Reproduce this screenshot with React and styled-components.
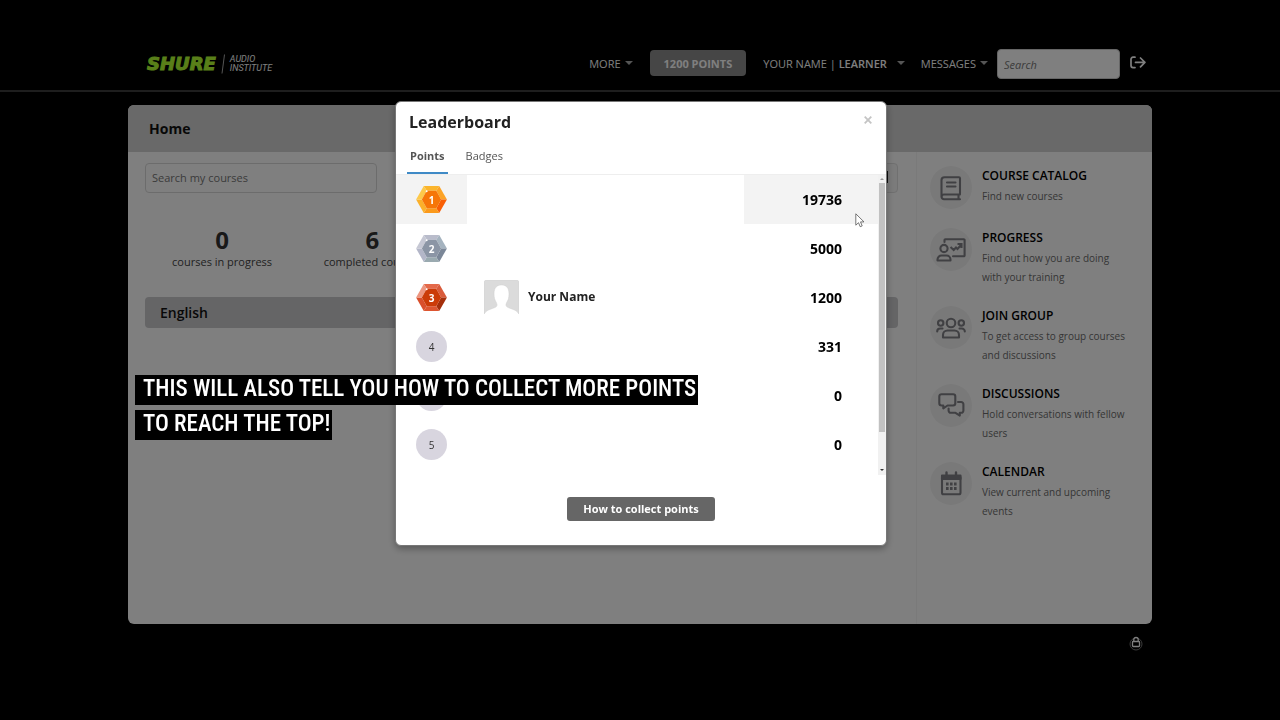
import React from "react";
import styled, { createGlobalStyle } from "styled-components";

const courseLinks = [
  { icon: "book", title: "COURSE CATALOG", text: "Find new courses" },
  { icon: "progress", title: "PROGRESS", text: "Find out how you are doing with your training" },
  { icon: "group", title: "JOIN GROUP", text: "To get access to group courses and discussions" },
  { icon: "chat", title: "DISCUSSIONS", text: "Hold conversations with fellow users" },
  { icon: "calendar", title: "CALENDAR", text: "View current and upcoming events" },
];

const leaders = [
  { rank: "1", points: "19736", gem: "gold", active: true },
  { rank: "2", points: "5000", gem: "silver" },
  { rank: "3", points: "1200", gem: "bronze", name: "Your Name" },
  { rank: "4", points: "331" },
  { rank: "", points: "0" },
  { rank: "5", points: "0" },
];

// top, upper right, lower right, bottom, lower left, upper left, center
const gems = {
  gold: ["#fbb52c", "#fca326", "#f95f05", "#fb9a1c", "#fbb02b", "#fdc94a", "#f67608"],
  silver: ["#b9bccb", "#a5b3bf", "#7b8798", "#9aaab0", "#b3b6c8", "#c6c8d4", "#8b95a5"],
  bronze: ["#e4694a", "#d95b3b", "#a52f0b", "#dd5530", "#d94f2c", "#ec9680", "#cb3b08"],
};

function Gem({ kind }) {
  const c = gems[kind];
  return (
    <svg width="31" height="27" viewBox="0 0 32 28" aria-hidden="true">
      <polygon points="8,0 24,0 21,5 11,5" fill={c[0]} />
      <polygon points="24,0 32,14 26,14 21,5" fill={c[1]} />
      <polygon points="32,14 24,28 21,23 26,14" fill={c[2]} />
      <polygon points="24,28 8,28 11,23 21,23" fill={c[3]} />
      <polygon points="8,28 0,14 6,14 11,23" fill={c[4]} />
      <polygon points="0,14 8,0 11,5 6,14" fill={c[5]} />
      <polygon points="11,5 21,5 26,14 21,23 11,23 6,14" fill={c[6]} />
      <circle cx="11" cy="5.500" r="1" fill="#fff" />
    </svg>
  );
}

function LinkIcon({ name }) {
  return (
    <svg width="30" height="30" viewBox="0 0 30 30" fill="none" stroke="currentColor" strokeWidth="2.1" strokeLinejoin="round" strokeLinecap="round" aria-hidden="true">
      {name === "book" && (
        <>
          <path d="M24 21.5H8a2.4 2.4 0 0 0 0 4.800h16M5.500 24V7.200A3 3 0 0 1 8.500 4.200H23a1 1 0 0 1 1 1V20.500a1 1 0 0 1-1 1M22.500 21.500v4.800" />
          <path d="M11 9.500h8.500M11 13.500h8.500" />
        </>
      )}
      {name === "progress" && (
        <>
          <circle cx="8" cy="13.500" r="3.600" />
          <path d="M1.500 25.500v-1a4 4 0 0 1 4-4h5a4 4 0 0 1 4 4v1zM8.500 7V5a.8.8 0 0 1 .8-.8h18.500a.8.8 0 0 1 .8.8v15.500a.8.8 0 0 1-.8.8H17" />
          <path d="M14.500 12l3.200 3 2.300-2.500 1.500 1.500 3.500-4M21.500 9h4v4" strokeLinecap="butt" strokeLinejoin="miter" />
        </>
      )}
      {name === "group" && (
        <>
          <circle cx="15" cy="10" r="4.300" />
          <circle cx="4.700" cy="10" r="2.700" />
          <circle cx="25.300" cy="10" r="2.700" />
          <path d="M7 24.500v-2.500a4.500 4.500 0 0 1 4.500-4.500h7a4.500 4.500 0 0 1 4.500 4.500v2.500zM1.200 18.500a3 3 0 0 1 3-3h2.300M28.800 18.500a3 3 0 0 0-3-3h-2.300" />
        </>
      )}
      {name === "chat" && (
        <>
          <path d="M5.500 3.200h11.600a2.200 2.200 0 0 1 2.200 2.200v6.900a2.200 2.200 0 0 1-2.200 2.200h-5.600l-4.200 3v-3H5.500a2.200 2.200 0 0 1-2.200-2.200V5.400a2.200 2.200 0 0 1 2.200-2.200z" />
          <path d="M22 11h3.200a2.200 2.200 0 0 1 2.200 2.200v6.400a2.200 2.200 0 0 1-2.200 2.200h-1.400v2.800l-4.300-2.800h-4.700a2.200 2.200 0 0 1-2.200-2.200v-2" />
        </>
      )}
      {name === "calendar" && (
        <>
          <rect x="6" y="7.200" width="18.500" height="18" rx="1.500" />
          <path d="M6 6.500h18.500v3.500H6z" fill="currentColor" />
          <path d="M10.500 3.500v4M20 3.500v4" strokeWidth="2.400" />
          <path d="M10 15h2.600M14 15h2.600M18 15h2.600M10 19.500h2.600M14 19.500h2.600M18 19.500h2.600" strokeWidth="2.800" strokeLinecap="butt" />
        </>
      )}
    </svg>
  );
}

function App() {
  return (
    <Page>
      <GlobalStyle />
      <Header>
        <HeaderInner>
          <Logo href="#home">
            <Brand>SHURE</Brand>
            <svg width="4" height="20" viewBox="0 0 4 20" aria-hidden="true">
              <path d="M3.500 0.500L1 19.500" stroke="#aaa" />
            </svg>
            <Institute>
              AUDIO
              <br />
              INSTITUTE
            </Institute>
          </Logo>
          <Nav>
            <NavLink href="#more">
              MORE <Caret />
            </NavLink>
            <PointsButton type="button">1200 POINTS</PointsButton>
            <NavLink href="#profile" $wide>
              <span>
                YOUR NAME | <b>LEARNER</b>
              </span>
              <Caret />
            </NavLink>
            <NavLink href="#messages">
              MESSAGES <Caret />
            </NavLink>
            <NavSearch type="search" placeholder="Search" aria-label="Search" />
            <LogoutLink href="#logout" aria-label="Log out">
              <svg width="16" height="13" viewBox="0 0 16 13" fill="none" stroke="currentColor" strokeWidth="1.700" strokeLinecap="round" strokeLinejoin="round">
                <path d="M5 1.200H3a2 2 0 0 0-2 2v6.400a2 2 0 0 0 2 2h2M5.500 6.400h9M10.500 2l4.400 4.400-4.400 4.400" />
              </svg>
            </LogoutLink>
          </Nav>
        </HeaderInner>
      </Header>

      <Panel>
        <PanelTitle>Home</PanelTitle>
        <PanelBody>
          <Main>
            <Tools>
              <CourseSearch type="text" placeholder="Search my courses" aria-label="Search my courses" />
              <ViewButton type="button" aria-label="Change view">
                <svg width="14" height="12" viewBox="0 0 14 12" aria-hidden="true">
                  <path d="M0 0h14v12H0z" fill="#222" />
                </svg>
              </ViewButton>
            </Tools>
            <Stats>
              <Stat>
                <strong>0</strong>
                <span>courses in progress</span>
              </Stat>
              <Stat>
                <strong>6</strong>
                <span>completed courses</span>
              </Stat>
            </Stats>
            <Category>English</Category>
          </Main>
          <Sidebar>
            {courseLinks.map((item) => (
              <SideLink href={"#" + item.icon} key={item.title}>
                <IconCircle>
                  <LinkIcon name={item.icon} />
                </IconCircle>
                <div>
                  <SideTitle>{item.title}</SideTitle>
                  <SideText>{item.text}</SideText>
                </div>
              </SideLink>
            ))}
          </Sidebar>
        </PanelBody>
      </Panel>

      <Footer>
        <svg width="14" height="16" viewBox="0 0 14 16" fill="none" aria-hidden="true">
          <circle cx="7" cy="9" r="6" stroke="#777" />
          <rect x="3.500" y="6.500" width="7" height="5" rx="0.800" fill="#000" stroke="#fff" strokeWidth="1.300" />
          <path d="M4.800 6V4.500a2.200 2.200 0 0 1 4.400 0V6" stroke="#fff" strokeWidth="1.300" />
        </svg>
      </Footer>

      <Backdrop>
        <Modal role="dialog" aria-labelledby="leaderboard-title">
          <ModalHead>
            <h2 id="leaderboard-title">Leaderboard</h2>
            <CloseButton type="button" aria-label="Close">
              <svg width="8" height="8" viewBox="0 0 8 8" stroke="currentColor" strokeWidth="1.800">
                <path d="M0.700 0.700l6.600 6.600M7.300 0.700L0.700 7.300" />
              </svg>
            </CloseButton>
          </ModalHead>
          <Tabs>
            <Tab type="button" $active>
              Points
            </Tab>
            <Tab type="button">Badges</Tab>
          </Tabs>
          <Scroller>
            <Table>
              <colgroup>
                <RankCol />
                <col />
                <PointsCol />
              </colgroup>
              <tbody>
                {leaders.map((leader, i) => (
                  <tr key={i}>
                    <RankCell $active={leader.active}>
                      <Rank $gem={leader.gem}>
                        {leader.gem && <Gem kind={leader.gem} />}
                        <span>{leader.rank}</span>
                      </Rank>
                    </RankCell>
                    <td>
                      {leader.name && (
                        <Person>
                          <svg width="35" height="35" viewBox="0 0 35 35" aria-hidden="true">
                            <path d="M3 0h29a3 3 0 0 1 3 3v31c-2-3-4-4-7-5-4-1.500-6-2-6-4 0-3 3-4 3-11C25 7.500 22 5 17.500 5S10 7.500 10 14c0 7 3 8 3 11 0 2-2 2.500-6 4-3 1-5 2-7 5V3a3 3 0 0 1 3-3z" fill="#dbdbdb" stroke="#cfcfcf" strokeWidth=".5" />
                          </svg>
                          <span>{leader.name}</span>
                        </Person>
                      )}
                    </td>
                    <PointsCell $active={leader.active}>{leader.points}</PointsCell>
                  </tr>
                ))}
              </tbody>
            </Table>
            <Scrollbar>
              <Arrow $up />
              <Thumb />
              <Arrow />
            </Scrollbar>
            <Pointer width="10" height="15" viewBox="0 0 10 15" aria-hidden="true">
              <path d="M.8.800v11.400l2.700-2.500 1.700 4 2-.8-1.700-4h3.500z" fill="#fff" stroke="#555" strokeWidth=".8" />
            </Pointer>
          </Scroller>
          <ModalFoot>
            <CollectButton type="button">How to collect points</CollectButton>
          </ModalFoot>
        </Modal>
      </Backdrop>

      <Caption>
        <span>THIS WILL ALSO TELL YOU HOW TO COLLECT MORE POINTS</span>
        <span>TO REACH THE TOP!</span>
      </Caption>
    </Page>
  );
}

export default App;

const GlobalStyle = createGlobalStyle`
  * {
    box-sizing: border-box;
  }
  body {
    margin: 0;
    background: #000;
    font-family: "Open Sans", "Noto Sans", sans-serif;
  }
  button, input {
    font-family: inherit;
  }
  a {
    color: inherit;
    text-decoration: none;
  }
`;
const Page = styled.div`
  min-height: 100vh;
  background: #000;
`;
const Header = styled.header`
  border-bottom: 2px solid #3c3c3c;
  padding: 49px 0 11px;
`;
const HeaderInner = styled.div`
  width: 80%;
  margin: auto;
  padding: 0 6px 0 19px;
  display: flex;
  align-items: center;
  justify-content: space-between;
`;
const Logo = styled.a`
  display: flex;
  align-items: center;
  gap: 5px;
`;
const Brand = styled.span`
  font-family: "DejaVu Sans", sans-serif;
  font-size: 18px;
  font-weight: 700;
  font-style: italic;
  line-height: 20px;
  color: #b2ff33;
  -webkit-text-stroke: 1px #b2ff33;
`;
const Institute = styled.span`
  font-family: Roboto, sans-serif;
  font-size: 9px;
  font-style: italic;
  line-height: 9px;
  color: #fff;
`;
const Nav = styled.nav`
  display: flex;
  align-items: center;
  font-size: 11px;
  color: #fff;
`;
const NavLink = styled.a`
  display: flex;
  align-items: center;
  gap: ${(p) => (p.$wide ? "10px" : "4px")};
  margin-right: ${(p) => (p.$wide ? "16px" : "0")};
  padding-bottom: 2px;
  b {
    font-weight: 600;
  }
`;
const Caret = styled.i`
  border: 4px solid transparent;
  border-top-color: #aaa;
  border-bottom: 0;
`;
const PointsButton = styled.button`
  height: 26px;
  margin: 0 17px 2px;
  padding: 0 14px;
  border: 0;
  border-radius: 4px;
  background: #8c8c8c;
  color: #fff;
  font-size: 11px;
  font-weight: 700;
`;
const NavSearch = styled.input`
  width: 123px;
  height: 30px;
  margin: 0 10px 0 9px;
  padding: 0 6px;
  border: 1px solid #ccc;
  border-radius: 4px;
  background: #fff;
  font-size: 11px;
  &::placeholder {
    font-style: italic;
    color: #777;
  }
`;
const LogoutLink = styled.a`
  display: flex;
  padding-bottom: 3px;
`;
const Panel = styled.div`
  width: 80%;
  min-height: 519px;
  margin: 13px auto 0;
  display: flex;
  flex-direction: column;
  border-radius: 6px;
  overflow: hidden;
  background: #fff;
`;
const PanelTitle = styled.h1`
  margin: 0;
  padding: 0 21px;
  font-size: 14px;
  font-weight: 700;
  line-height: 47px;
  background: #d2d2d2;
  color: #111;
`;
const PanelBody = styled.div`
  flex: 1;
  display: grid;
  grid-template-columns: minmax(0, 1fr) 236px;
`;
const Main = styled.main`
  padding: 11px 18px 20px 17px;
`;
const Tools = styled.div`
  display: flex;
  justify-content: space-between;
`;
const CourseSearch = styled.input`
  width: 232px;
  height: 30px;
  padding: 0 6px 2px;
  border: 1px solid #d8d8d8;
  border-radius: 4px;
  font-size: 11px;
  &::placeholder {
    color: #777;
  }
`;
const ViewButton = styled.button`
  height: 30px;
  padding: 0 9px;
  border: 1px solid #e0e0e0;
  border-radius: 4px;
  background: #f6f6f6;
`;
const Stats = styled.div`
  display: grid;
  grid-template-columns: repeat(5, 1fr);
  padding: 34px 0 26px 2px;
`;
const Stat = styled.div`
  display: flex;
  flex-direction: column;
  align-items: center;
  color: #444;
  white-space: nowrap;
  strong {
    font-size: 24px;
    line-height: 26px;
    color: #333;
  }
  span {
    font-size: 11px;
    line-height: 18px;
  }
`;
const Category = styled.h2`
  margin: 0;
  padding: 0 15px;
  border-radius: 4px;
  background: #cacacd;
  color: #111;
  font-size: 14px;
  font-weight: 600;
  line-height: 31px;
`;
const Sidebar = styled.aside`
  display: flex;
  flex-direction: column;
  gap: 19px;
  padding: 14px 22px 20px 13px;
  border-left: 1px solid #f4f4f4;
`;
const SideLink = styled.a`
  display: grid;
  grid-template-columns: 42px 1fr;
  gap: 10px;
`;
const IconCircle = styled.span`
  width: 42px;
  height: 43px;
  display: flex;
  align-items: center;
  justify-content: center;
  border-radius: 50%;
  background: #f3f3f3;
  color: #818186;
`;
const SideTitle = styled.div`
  margin-bottom: 1px;
  font-size: 12px;
  font-weight: 600;
  line-height: 20px;
  color: #000;
`;
const SideText = styled.div`
  font-size: 10px;
  line-height: 19px;
  color: #6c6c6c;
`;
const Footer = styled.footer`
  width: 80%;
  margin: auto;
  padding: 11px 9px;
  display: flex;
  justify-content: flex-end;
`;
const Backdrop = styled.div`
  position: fixed;
  inset: 0;
  padding: 101px 0 0 2px;
  background: rgba(0, 0, 0, 0.5);
`;
const Modal = styled.section`
  width: 492px;
  max-width: 100%;
  margin: auto;
  border: 1px solid #777;
  border-radius: 6px;
  background: #fff;
  box-shadow: 0 3px 7px rgba(0, 0, 0, 0.3);
`;
const ModalHead = styled.div`
  display: flex;
  justify-content: space-between;
  align-items: center;
  padding: 9px 13px 0;
  h2 {
    margin: 0;
    font-size: 16px;
    font-weight: 700;
    line-height: 22px;
    color: #222;
  }
`;
const CloseButton = styled.button`
  display: flex;
  padding: 0 1px 4px;
  border: 0;
  background: none;
  color: #c4c4c4;
`;
const Tabs = styled.div`
  display: flex;
  gap: 15px;
  padding: 5px 11px 0;
  border-bottom: 1px solid #eee;
`;
const Tab = styled.button`
  height: 36px;
  padding: 0 3px;
  border: 0;
  border-bottom: 2px solid ${(p) => (p.$active ? "#3f8ac6" : "transparent")};
  background: none;
  color: #555;
  font-size: 11px;
  font-weight: ${(p) => (p.$active ? 700 : 400)};
`;
const Scroller = styled.div`
  position: relative;
  display: flex;
  height: 300px;
`;
const Table = styled.table`
  flex: 1;
  align-self: flex-start;
  table-layout: fixed;
  border-collapse: collapse;
  td {
    height: 49px;
    padding: 0 0 0 17px;
  }
`;
const RankCol = styled.col`
  width: 71px;
`;
const PointsCol = styled.col`
  width: 134px;
`;
const RankCell = styled.td`
  &&& {
    padding: 0 20px;
  }
  background: ${(p) => (p.$active ? "#f3f3f3" : "#fff")};
`;
const PointsCell = styled.td`
  &&& {
    padding: 0 36px 0 0;
  }
  background: ${(p) => (p.$active ? "#f3f3f3" : "#fff")};
  color: #000;
  font-size: 14px;
  font-weight: 700;
  text-align: right;
`;
const Rank = styled.div`
  width: 31px;
  height: 31px;
  display: grid;
  place-items: center;
  border-radius: 50%;
  background: ${(p) => (p.$gem ? "transparent" : "#d8d5df")};
  color: ${(p) => (p.$gem ? "#fff" : "#333")};
  font-size: 10px;
  font-weight: ${(p) => (p.$gem ? 700 : 400)};
  & > * {
    grid-area: 1 / 1;
  }
`;
const Person = styled.div`
  display: flex;
  align-items: center;
  gap: 9px;
  color: #222;
  font-size: 12px;
  font-weight: 700;
  span {
    padding-bottom: 3px;
  }
`;
const Scrollbar = styled.div`
  width: 8px;
  display: flex;
  flex-direction: column;
  align-items: center;
  background: #f1f1f1;
`;
const Arrow = styled.i`
  margin: ${(p) => (p.$up ? "3px 0" : "auto 0 4px")};
  border: 2px solid transparent;
  ${(p) => (p.$up ? "border-bottom-color: #999; border-top: 0;" : "border-top-color: #333; border-bottom: 0;")}
`;
const Thumb = styled.div`
  width: 6px;
  height: 249px;
  background: #c1c1c1;
`;
const Pointer = styled.svg`
  position: absolute;
  top: 38px;
  right: 21px;
`;
const ModalFoot = styled.div`
  padding: 21px 0 24px;
  text-align: center;
`;
const CollectButton = styled.button`
  height: 24px;
  padding: 0 16px;
  border: 0;
  border-radius: 3px;
  background: #666;
  color: #fff;
  font-size: 11px;
  font-weight: 700;
`;
const Caption = styled.div`
  position: absolute;
  left: 135px;
  top: 375px;
  display: flex;
  flex-direction: column;
  align-items: flex-start;
  gap: 5px;
  color: #fff;
  font-family: "Liberation Sans Narrow", "Roboto Condensed", "Open Sans Condensed", "Liberation Sans", sans-serif;
  font-size: 23px;
  font-weight: 500;
  line-height: 26px;
  white-space: nowrap;
  span {
    padding: 1px 2px 3px 8px;
    background: #000;
  }
`;
